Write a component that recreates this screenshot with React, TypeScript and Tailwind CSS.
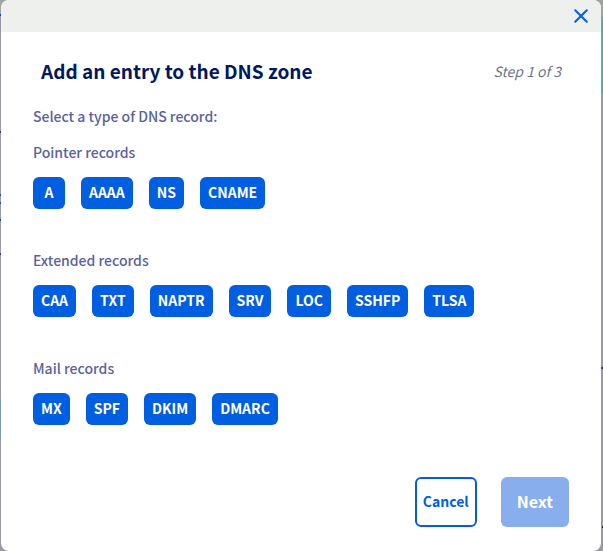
type Group = { label: string; records: string[] };

const groups: Group[] = [
  { label: "Pointer records", records: ["A", "AAAA", "NS", "CNAME"] },
  {
    label: "Extended records",
    records: ["CAA", "TXT", "NAPTR", "SRV", "LOC", "SSHFP", "TLSA"],
  },
  { label: "Mail records", records: ["MX", "SPF", "DKIM", "DMARC"] },
];

function RecordGroup({ label, records }: Group) {
  return (
    <section className="mb-[39px]">
      <h2 className="mb-[13px] text-[14px] leading-6 font-medium">{label}</h2>
      <div className="flex flex-wrap gap-4">
        {records.map((record) => (
          <button
            key={record}
            type="button"
            className="h-8 min-w-8 rounded-md bg-[#005ee0] px-2 pb-0.5 text-[14px] leading-6 font-bold text-white"
          >
            {record}
          </button>
        ))}
      </div>
    </section>
  );
}

/* Slivers of the dimmed page that stay visible beside the dialog. */
function Backdrop() {
  return (
    <div aria-hidden="true" className="absolute inset-0 -z-10 flex justify-between bg-[#9a98a8]">
      <div className="flex w-2 flex-col">
        <div className="h-3.5 bg-[#a2a2a2]" />
        <div className="h-0.5 bg-[#0b4ba3]" />
        <div className="mt-[115px] h-0.5 bg-[#2a3a80]" />
        <div className="mt-[61px] h-2.5 border-y-2 border-[#2350a0]" />
        <div className="mt-[15px] h-0.5 bg-[#0b4ba3]" />
        <div className="mt-8 h-0.5 bg-[#2a3a80]" />
        <div className="mt-[143px] h-[42px] bg-[#7b9cb4]" />
      </div>
      <div className="flex w-2 flex-col items-end">
        <div className="h-4 w-2 bg-[#a2a2a2]" />
        <div className="mt-1 h-[73px] w-px bg-[#2fb3a0]" />
        <div className="mt-[274px] h-0.5 w-2 bg-[#0b4ba3]" />
        <div className="mt-[157px] h-0.5 w-px bg-[#222222]" />
      </div>
    </div>
  );
}

export default function App() {
  return (
    <div className="relative isolate min-h-screen pr-0.5 pl-px font-['Noto_Sans_CJK_SC','Noto_Sans',sans-serif]">
      <Backdrop />
      <main
        role="dialog"
        aria-labelledby="dialog-title"
        className="overflow-hidden rounded-lg bg-white text-[#5a62a0]"
      >
        <div className="flex h-8 items-center justify-end bg-[#eef0ee] px-3">
          <button type="button" aria-label="Close" className="text-[#005ee0]">
            <svg width="16" height="16" viewBox="0 0 16 16" fill="none" stroke="currentColor" strokeWidth="2" strokeLinecap="round">
              <path d="M2.2 2.2 13.8 13.8M13.8 2.2 2.2 13.8" />
            </svg>
          </button>
        </div>
        <div className="px-8 pt-[27px] pb-6">
          <header className="mb-[21px] flex items-center justify-between px-2">
            <h1 id="dialog-title" className="text-[19px] leading-6 font-bold text-[#00185e]">
              Add an entry to the DNS zone
            </h1>
            <p className="text-[14px] leading-6 text-[#6d7784] italic">Step 1 of 3</p>
          </header>
          <p className="mb-3 text-[14px] leading-6 font-medium">Select a type of DNS record:</p>
          {groups.map((group) => (
            <RecordGroup key={group.label} {...group} />
          ))}
          <footer className="-mt-1 flex justify-end gap-6 pt-[17px]">
            <button
              type="button"
              className="h-[50px] rounded-md border-2 border-[#005ee0] px-1.5 pb-0.5 text-[14px] leading-6 font-bold text-[#005ee0]"
            >
              Cancel
            </button>
            <button
              type="button"
              disabled
              className="h-[50px] rounded-md bg-[#88aeee] px-4 pb-0.5 text-[16px] leading-6 font-bold text-white"
            >
              Next
            </button>
          </footer>
        </div>
      </main>
    </div>
  );
}
